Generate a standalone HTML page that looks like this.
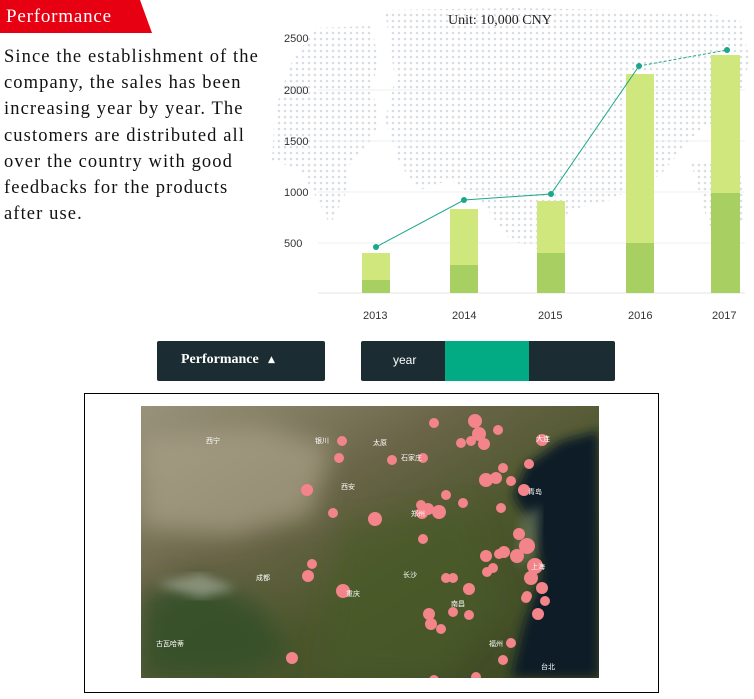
<!DOCTYPE html>
<html><head><meta charset="utf-8"><style>
body{margin:0;width:754px;height:699px;background:#fff;position:relative;overflow:hidden;font-family:"Liberation Serif",serif}
.tag{position:absolute;left:0;top:0;width:152px;height:33px;background:#e60012;clip-path:polygon(0 0,140px 0,152px 33px,0 33px)}
.tag span{position:absolute;left:6px;top:6px;color:#fff;font-size:19px;letter-spacing:0.8px}
.txt{position:absolute;left:4px;top:44px;font-size:18.5px;line-height:26.2px;color:#111;white-space:nowrap;letter-spacing:1.1px}
.btn{position:absolute;top:341px;height:40px;background:#1b2d33;border-radius:2px;color:#fff}
.box{position:absolute;left:84px;top:393px;width:573px;height:298px;border:1px solid #000}
</style></head><body>
<div class="tag"><span>Performance</span></div>
<div class="txt">Since the establishment of the<br>company, the sales has been<br>increasing year by year. The<br>customers are distributed all<br>over the country with good<br>feedbacks for the products<br>after use.</div>
<svg style="position:absolute;left:0;top:0" width="754" height="330">
<defs><pattern id="dp" width="6" height="6" patternUnits="userSpaceOnUse"><circle cx="3" cy="3" r="1.3" fill="#d8dde3"/></pattern></defs>
<g fill="url(#dp)">
<path d="M315 28 L372 26 L378 60 L372 90 L380 120 L372 140 L350 165 L345 195 L330 225 L318 200 L300 170 L272 160 L275 110 L290 65 Z"/>
<path d="M385 10 L520 8 L620 10 L700 12 L740 20 L750 60 L735 110 L700 130 L660 175 L610 200 L570 210 L540 250 L510 240 L480 200 L450 180 L420 190 L400 165 L385 120 L395 80 Z"/>
<path d="M690 160 L740 170 L745 220 L710 230 Z"/>
</g>
<g stroke="#eef0f2"><line x1="318" y1="90" x2="745" y2="90"/><line x1="318" y1="141" x2="745" y2="141"/><line x1="318" y1="192" x2="745" y2="192"/><line x1="318" y1="243" x2="745" y2="243"/></g>
<line x1="318" y1="293" x2="745" y2="293" stroke="#e6e6e6"/>
<g font-family="Liberation Sans,sans-serif" font-size="11" fill="#333">
<text x="284" y="42">2500</text><text x="284" y="94">2000</text><text x="284" y="145">1500</text><text x="284" y="196">1000</text><text x="284" y="247">500</text>
<text x="363" y="319">2013</text><text x="452" y="319">2014</text><text x="538" y="319">2015</text><text x="628" y="319">2016</text><text x="712" y="319">2017</text>
</g>
<text x="448" y="24" font-size="14" fill="#222">Unit: 10,000 CNY</text>
<g fill="#cfe77c"><rect x="362" y="253" width="28" height="40"/><rect x="450" y="209" width="28" height="84"/><rect x="537" y="201" width="28" height="92"/><rect x="626" y="74" width="28" height="219"/><rect x="711" y="55" width="29" height="238"/></g>
<g fill="#a8cf62"><rect x="362" y="280" width="28" height="13"/><rect x="450" y="265" width="28" height="28"/><rect x="537" y="253" width="28" height="40"/><rect x="626" y="243" width="28" height="50"/><rect x="711" y="193" width="29" height="100"/></g>
<polyline points="376,247 464,200 551,194 639,66" fill="none" stroke="#1aa88a" stroke-width="1"/>
<line x1="639" y1="66" x2="727" y2="50" stroke="#1aa88a" stroke-dasharray="3,2"/>
<g fill="#1aa88a"><circle cx="376" cy="247" r="3"/><circle cx="464" cy="200" r="3"/><circle cx="551" cy="194" r="3"/><circle cx="639" cy="66" r="3"/><circle cx="727" cy="50" r="3"/></g>
</svg>
<div class="btn" style="left:157px;width:168px"><span style="position:absolute;left:24px;top:11px;font-size:14px;font-weight:bold">Performance</span><span style="position:absolute;left:111px;top:14px;font-size:9px;font-family:'DejaVu Sans'">▲</span></div>
<div class="btn" style="left:361px;width:254px"><span style="position:absolute;left:32px;top:12px;font-size:12px;font-family:'Liberation Sans',sans-serif">year</span><div style="position:absolute;left:84px;top:0;width:84px;height:40px;background:#02ab83"></div></div>
<div class="box"></div>
<svg style="position:absolute;left:141px;top:406px" width="458" height="272">
<defs>
<linearGradient id="g1" x1="0" y1="0" x2="1" y2="1"><stop offset="0" stop-color="#9a937c"/><stop offset=".35" stop-color="#6a6548"/><stop offset=".6" stop-color="#4b562c"/><stop offset="1" stop-color="#3c4824"/></linearGradient>
<filter id="bl"><feGaussianBlur stdDeviation="12"/></filter>
<filter id="bl2"><feGaussianBlur stdDeviation="5"/></filter>
</defs>
<rect width="458" height="272" fill="url(#g1)"/>
<g filter="url(#bl)">
<path d="M0 30 L120 20 L190 40 L170 110 L90 130 L0 120Z" fill="#a9a188" opacity=".7"/>
<path d="M0 190 L60 170 L120 200 L150 250 L90 272 L0 272Z" fill="#35502a" opacity=".9"/>
<path d="M200 120 L330 100 L360 200 L300 272 L180 272Z" fill="#4a5a26" opacity=".6"/>
</g>
<path d="M15 178 L60 168 L95 182 L60 192 Z" fill="#d6d6ce" opacity=".45" filter="url(#bl2)"/>
<path d="M385 60 L420 35 L458 25 L458 272 L370 272 L382 220 L400 170 L392 120 L372 90Z" fill="#0e1a28" filter="url(#bl2)"/>
<path d="M380 110 L400 100 L395 150 L375 160Z" fill="#6d7a62" opacity=".6" filter="url(#bl2)"/>
<g fill="#f2848a">
<circle cx="293" cy="17" r="5"/><circle cx="334" cy="15" r="7"/><circle cx="338" cy="28" r="7"/><circle cx="343" cy="38" r="6"/><circle cx="330" cy="35" r="5"/><circle cx="320" cy="37" r="5"/><circle cx="357" cy="24" r="5"/><circle cx="401" cy="34" r="6"/><circle cx="282" cy="52" r="5"/><circle cx="251" cy="54" r="5"/><circle cx="201" cy="35" r="5"/><circle cx="198" cy="52" r="5"/><circle cx="362" cy="62" r="5"/><circle cx="388" cy="58" r="5"/><circle cx="345" cy="74" r="7"/><circle cx="355" cy="72" r="6"/><circle cx="370" cy="75" r="5"/><circle cx="383" cy="84" r="6"/><circle cx="166" cy="84" r="6"/><circle cx="305" cy="89" r="5"/><circle cx="280" cy="99" r="5"/><circle cx="322" cy="97" r="5"/><circle cx="360" cy="102" r="5"/><circle cx="281" cy="107" r="6"/><circle cx="298" cy="106" r="7"/><circle cx="287" cy="103" r="6"/><circle cx="234" cy="113" r="7"/><circle cx="192" cy="107" r="5"/><circle cx="282" cy="133" r="5"/><circle cx="378" cy="128" r="6"/><circle cx="386" cy="140" r="8"/><circle cx="376" cy="150" r="7"/><circle cx="394" cy="160" r="8"/><circle cx="390" cy="172" r="7"/><circle cx="401" cy="182" r="6"/><circle cx="386" cy="190" r="5"/><circle cx="404" cy="195" r="5"/><circle cx="363" cy="146" r="6"/><circle cx="345" cy="150" r="6"/><circle cx="352" cy="162" r="5"/><circle cx="358" cy="148" r="5"/><circle cx="171" cy="158" r="5"/><circle cx="167" cy="170" r="6"/><circle cx="202" cy="185" r="7"/><circle cx="305" cy="172" r="5"/><circle cx="312" cy="172" r="5"/><circle cx="328" cy="183" r="6"/><circle cx="346" cy="166" r="5"/><circle cx="397" cy="208" r="6"/><circle cx="385" cy="192" r="5"/><circle cx="288" cy="208" r="6"/><circle cx="290" cy="218" r="6"/><circle cx="312" cy="206" r="5"/><circle cx="328" cy="209" r="5"/><circle cx="300" cy="223" r="5"/><circle cx="370" cy="237" r="5"/><circle cx="362" cy="254" r="5"/><circle cx="151" cy="252" r="6"/><circle cx="335" cy="271" r="5"/><circle cx="293" cy="274" r="5"/>
</g>
<g font-family="Liberation Sans,'Noto Sans CJK SC',sans-serif" font-size="7" fill="#fff">
<text x="65" y="37">西宁</text><text x="174" y="37">银川</text><text x="232" y="39">太原</text><text x="200" y="83">西安</text><text x="260" y="54">石家庄</text><text x="387" y="88">青岛</text><text x="262" y="171">长沙</text><text x="205" y="190">重庆</text><text x="390" y="163">上海</text><text x="400" y="263">台北</text><text x="348" y="240">福州</text><text x="310" y="200">南昌</text><text x="270" y="110">郑州</text><text x="115" y="174">成都</text><text x="15" y="240">古瓦哈蒂</text><text x="395" y="35">大连</text>
</g>
</svg>
</body></html>
